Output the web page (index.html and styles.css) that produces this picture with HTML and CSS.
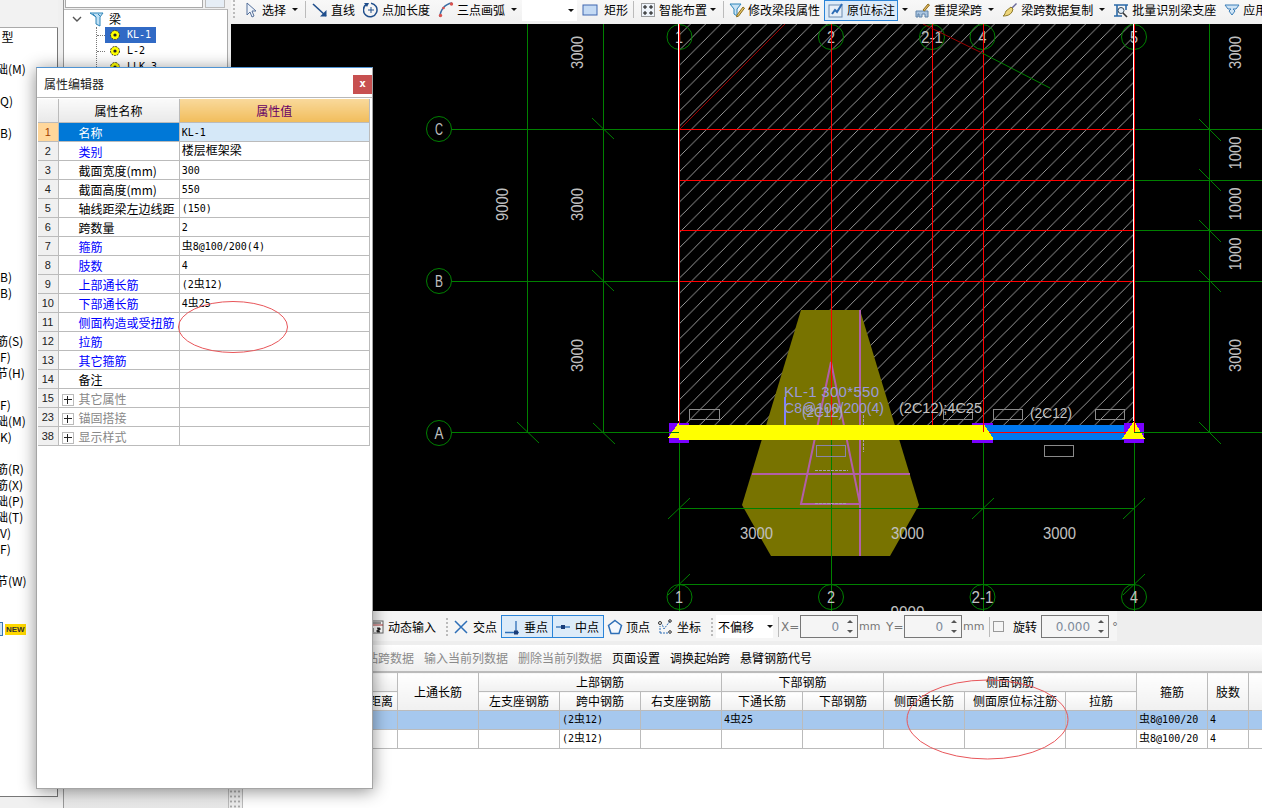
FILE: index.html
```html
<!DOCTYPE html>
<html lang="zh-CN">
<head>
<meta charset="utf-8">
<title>属性编辑器</title>
<link rel="stylesheet" href="styles.css">
</head>
<body>
<div class="app">
  <aside class="side">
    <div class="side-head"></div>
    <div class="side-list">
      <div class="srow">&nbsp;&nbsp;型</div><div class="srow"></div>
      <div class="srow">础(M)</div><div class="srow"></div>
      <div class="srow">(Q)</div><div class="srow"></div>
      <div class="srow">(B)</div><div class="srow"></div><div class="srow"></div><div class="srow"></div><div class="srow"></div><div class="srow"></div><div class="srow"></div><div class="srow"></div><div class="srow"></div>
      <div class="srow">(B)</div>
      <div class="srow">(B)</div><div class="srow"></div><div class="srow"></div>
      <div class="srow">筋(S)</div>
      <div class="srow">(F)</div>
      <div class="srow">节(H)</div><div class="srow"></div>
      <div class="srow">(F)</div>
      <div class="srow">础(M)</div>
      <div class="srow">(K)</div><div class="srow"></div>
      <div class="srow">筋(R)</div>
      <div class="srow">筋(X)</div>
      <div class="srow">础(P)</div>
      <div class="srow">础(T)</div>
      <div class="srow">(V)</div>
      <div class="srow">(F)</div><div class="srow"></div>
      <div class="srow">节(W)</div><div class="srow"></div><div class="srow"></div>
      <div class="srow new-row"><span class="new-box"></span><span class="new">NEW</span></div>
    </div>
  </aside>
  <div class="gutter"></div>
  <section class="treecol">
    <div class="tree-search"><div class="search-box"></div><div class="search-btn"></div></div>
    <div class="tree">
      <div class="troot">
        <svg class="chev" width="10" height="6" viewBox="0 0 10 6"><path d="M1 1l4 4 4-4" fill="none" stroke="#555" stroke-width="1.4"/></svg>
        <svg class="beamicon" width="15" height="16" viewBox="0 0 15 16"><path d="M1 2h13l-3 4v9l-4-2V6z" fill="#bfe0f5" stroke="#2d84b8"/><path d="M4 3l3 3M9 3l2 2" stroke="#2d84b8" fill="none"/></svg>
        <span>梁</span>
      </div>
      <div class="tkids">
        <div class="titem sel"><svg class="gear" width="12" height="12" viewBox="0 0 12 12"><circle cx="6" cy="6" r="4.5" fill="#ff0" stroke="#333" stroke-dasharray="2 1"/><circle cx="6" cy="6" r="1.6" fill="#222"/></svg><span>KL-1</span></div>
        <div class="titem"><svg class="gear" width="12" height="12" viewBox="0 0 12 12"><circle cx="6" cy="6" r="4.5" fill="#ff0" stroke="#333" stroke-dasharray="2 1"/><circle cx="6" cy="6" r="1.6" fill="#222"/></svg><span>L-2</span></div>
        <div class="titem"><svg class="gear" width="12" height="12" viewBox="0 0 12 12"><circle cx="6" cy="6" r="4.5" fill="#ff0" stroke="#333" stroke-dasharray="2 1"/><circle cx="6" cy="6" r="1.6" fill="#222"/></svg><span>LLK-3</span></div>
      </div>
    </div>
    <div class="tree-foot"></div>
  </section>
  <div class="splitter"></div>
  <main class="main">
    <div class="toolbar">
      <i class="grip"></i>
      <div class="tool first"><svg width="16" height="16" viewBox="0 0 16 16"><path d="M4 1v12l3-3 2 5 2-1-2-5h4z" fill="#eef3fa" stroke="#55709a"/></svg><span>选择</span><b class="caret"></b></div>
      <i class="sep sa"></i>
      <div class="tool"><svg width="16" height="16" viewBox="0 0 16 16"><path d="M1 2l13 12" stroke="#1f4e8c" stroke-width="1.6"/><path d="M14.5 8v6.5H8z" fill="#1f4e8c"/></svg><span>直线</span></div>
      <div class="tool"><svg width="16" height="16" viewBox="0 0 16 16"><path d="M3 2.6A6.8 6.8 0 1 0 8 1.2" fill="none" stroke="#1f4e8c" stroke-width="1.5"/><path d="M1 1l5 0-2 4z" fill="#1f4e8c"/><path d="M8 5v6M5 8h6" stroke="#1f4e8c"/></svg><span>点加长度</span></div>
      <div class="tool"><svg width="16" height="16" viewBox="0 0 16 16"><path d="M2 15C2 8 7 2 14 1" fill="none" stroke="#3a6ea5" stroke-width="1.5"/><circle cx="2.5" cy="13.5" r="1.7" fill="#d9534f"/><circle cx="13.5" cy="2" r="1.7" fill="#d9534f"/><circle cx="5.5" cy="6" r="1.3" fill="#d9534f"/></svg><span>三点画弧</span><b class="caret"></b></div>
      <div class="combo"><b class="caret"></b></div>
      <div class="tool rect"><svg width="16" height="16" viewBox="0 0 16 16"><rect x="1" y="3" width="14" height="10" fill="#c4daf4" stroke="#3f66b0"/></svg><span class="wide">矩形</span></div>
      <i class="sep sb"></i>
      <div class="tool"><svg width="16" height="16" viewBox="0 0 16 16"><rect x="1.5" y="1.5" width="13" height="13" fill="#eef4fb" stroke="#444" stroke-dasharray="1 1"/><path d="M5 3v4M3 5h4M11 3v4M9 5h4M5 9v4M3 11h4M11 9v4M9 11h4" stroke="#111"/></svg><span>智能布置</span><b class="caret flush"></b></div>
      <i class="sep sc"></i>
      <div class="tool"><svg width="16" height="16" viewBox="0 0 16 16"><path d="M1 2h11l-4 5v7l-3-2V7z" fill="#c9e3f5" stroke="#2d84b8"/><path d="M8 13l6-8 1.5 1.2-6 8-2 .6z" fill="#e8c66a" stroke="#8a6d1d"/></svg><span>修改梁段属性</span></div>
      <div class="tool active"><svg width="16" height="16" viewBox="0 0 16 16"><rect x="1" y="3" width="13" height="12" fill="#e7eff8" stroke="#6d8cb0"/><path d="M4 12l3-4 2 2 5-8" fill="none" stroke="#2d6cb5" stroke-width="2"/></svg><span>原位标注</span></div>
      <b class="caret solo"></b>
      <div class="tool t7"><svg width="16" height="16" viewBox="0 0 16 16"><path d="M1 15V9h12v6h-3v-3H7v3H4v-3H3v3z" fill="#a9c4e0" stroke="#5f82a8"/><path d="M8 8l5-6 1.5 1-5 6z" fill="#e5b75f" stroke="#8a6d1d"/></svg><span>重提梁跨</span><b class="caret"></b></div>
      <div class="tool"><svg width="16" height="16" viewBox="0 0 16 16"><path d="M9 6l5-5 1 1-5 5z" fill="#6a6a9a"/><path d="M9 5l2 2-1 3c-2 3-5 4-9 4 2-1 2-3 3-5z" fill="#eed67a" stroke="#8f7a2a"/></svg><span>梁跨数据复制</span><b class="caret"></b></div>
      <div class="tool"><svg width="16" height="16" viewBox="0 0 16 16"><path d="M1 3h14M1 14h8M4 3v11M13 3v5" stroke="#2b6aa8" stroke-width="1.6"/><circle cx="8" cy="8.5" r="3" fill="#e4f0fa" stroke="#345"/><path d="M10 11l4 4" stroke="#333" stroke-width="1.6"/></svg><span>批量识别梁支座</span></div>
      <div class="tool"><svg width="16" height="16" viewBox="0 0 16 16"><path d="M1 3h14l-3 4H9l2 2-3 4-3-4 2-2H4z" fill="#cfe4f6" stroke="#3c7fb8"/></svg><span>应用</span></div>
    </div>

    <svg class="canvas" viewBox="231 24 1031 587" width="1031" height="587">
      <defs>
        <pattern id="hatch" patternUnits="userSpaceOnUse" width="15.2" height="15.2">
          <path d="M-1 16.2L16.2 -1" stroke="#c8c8c8" stroke-width="0.8"/>
        </pattern>
      </defs>
      <rect x="231" y="24" width="1031" height="587" fill="#000"/>
      <rect x="680" y="24" width="453" height="402" fill="url(#hatch)"/>

      <g class="gline">
        <path d="M452 129.500H679M452 281.500H679M452 432.500H669M1134 129.500H1262M1134 180.500H1262M1134 230.500H1262M1134 281.500H1262M1144 432.500H1262"/>
        <path d="M527.500 24V432.500M603.500 24V432.500M1209.500 24V432.500"/>
        <path d="M679.500 440V611M831.500 440V611M983.500 440V611M1134.500 440V611"/>
        <path d="M679 508.500H1134M679 584.500H1134"/>
      </g>
      <g class="tick">
        <path d="M592 118l22 21M592 270l22 21M517 422l22 21M593 423l22 21M1199 119l22 22M1199 169l22 22M1199 220l22 22M1199 270l22 22M1199 422l22 22"/>
        <path d="M668 519l22-21M820 519l22-21M972 519l22-21M1123 519l22-21M668 595l22-21M1123 595l22-21"/>
      </g>
      <g class="ring">
        <circle cx="679.500" cy="37" r="12.500"/><circle cx="831" cy="37" r="12.500"/><circle cx="932" cy="37" r="12.500"/><circle cx="982.500" cy="37" r="12.500"/><circle cx="1134" cy="37" r="12.500"/>
        <circle cx="439" cy="129" r="12.500"/><circle cx="439" cy="281" r="12.500"/><circle cx="439" cy="433" r="12.500"/>
        <circle cx="679.500" cy="597" r="12.500"/><circle cx="831" cy="597" r="12.500"/><circle cx="982.500" cy="597" r="12.500"/><circle cx="1134" cy="597" r="12.500"/>
      </g>
      <g class="dim">
        <text x="679" y="43" textLength="8" lengthAdjust="spacingAndGlyphs">1</text><text x="831" y="43" textLength="8" lengthAdjust="spacingAndGlyphs">2</text><text x="932" y="43" textLength="22" lengthAdjust="spacingAndGlyphs">2-1</text><text x="982.500" y="43" textLength="8" lengthAdjust="spacingAndGlyphs">4</text><text x="1134" y="43" textLength="8" lengthAdjust="spacingAndGlyphs">5</text>
      </g>
      <g class="rline">
        <path d="M679 129.500H1134M679 180.500H1134M679 230.500H1134M679 281.500H1134"/>
        <path d="M679.500 24V425M831.500 24V310M932.500 24V425M983.500 24V425M1134.500 24V425"/>
      </g>
      <path d="M678.500 24V421M1133.500 24V421" class="wline"/>
      <path d="M680 129L785 24M923 24L982 53" class="dred"/>
      <path d="M982 53L1050 88" class="gdiag"/>

      <path class="olive" d="M801 310H860L919 505 890 556H771L742 505Z"/>
      <path class="mag" d="M860 310V556M752 474H910M831 362L801 504H860Z"/>
      <path class="rline" d="M831.500 310V425"/>
      <path class="gline" d="M831.500 440V556M742 508.500H919"/>
      <path class="bluev" d="M784.500 397V425"/>

      <g class="boxes">
        <rect x="689.500" y="409.500" width="30" height="10"/><rect x="943.500" y="409.500" width="29" height="10"/><rect x="993.500" y="409.500" width="29" height="10"/><rect x="1095.500" y="409.500" width="29" height="10"/><rect x="1044.500" y="445.500" width="29" height="11"/>
        <rect class="vio" x="816.500" y="445.500" width="29" height="11"/>
      </g>
      <path class="tiny" d="M815 470.500H848M815 503.500H847M863.500 415V452"/>

      <path fill="#7a00ff" d="M669 423h20v20h-20zM972 423h21v20h-21zM1124 423h20v20h-20z"/>
      <rect x="679" y="425" width="304" height="15" fill="#ff0"/>
      <rect x="983" y="425" width="141" height="15" fill="#0078f0"/>
      <path d="M983.500 432.500H1134" stroke="#f00" fill="none"/>
      <path fill="#ff0" d="M679 422L668 438H679ZM983 423L993 438V440H983ZM1134 421L1122 439H1145Z"/>
      <path d="M983.500 423V432" stroke="#f00" fill="none"/>
      <path d="M1134.500 421V433" stroke="#f00" fill="none"/>
      <path d="M668 432.500H679M1134 432.500H1145" class="gline"/>

      <g class="dim">
        <text transform="translate(583,52.500) rotate(-90)" textLength="33" lengthAdjust="spacingAndGlyphs">3000</text>
        <text transform="translate(583,204.500) rotate(-90)" textLength="33" lengthAdjust="spacingAndGlyphs">3000</text>
        <text transform="translate(583,355.500) rotate(-90)" textLength="33" lengthAdjust="spacingAndGlyphs">3000</text>
        <text transform="translate(508,204.500) rotate(-90)" textLength="33" lengthAdjust="spacingAndGlyphs">9000</text>
        <text transform="translate(1241,52.500) rotate(-90)" textLength="33" lengthAdjust="spacingAndGlyphs">3000</text>
        <text transform="translate(1241,153) rotate(-90)" textLength="33" lengthAdjust="spacingAndGlyphs">1000</text>
        <text transform="translate(1241,204) rotate(-90)" textLength="33" lengthAdjust="spacingAndGlyphs">1000</text>
        <text transform="translate(1241,254) rotate(-90)" textLength="33" lengthAdjust="spacingAndGlyphs">1000</text>
        <text transform="translate(1241,355.500) rotate(-90)" textLength="33" lengthAdjust="spacingAndGlyphs">3000</text>
        <text x="756.500" y="539" textLength="33" lengthAdjust="spacingAndGlyphs">3000</text>
        <text x="907.500" y="539" textLength="33" lengthAdjust="spacingAndGlyphs">3000</text>
        <text x="1059.500" y="539" textLength="33" lengthAdjust="spacingAndGlyphs">3000</text>
        <text x="907.500" y="618" textLength="34" lengthAdjust="spacingAndGlyphs">9000</text>
        <text x="439" y="135" textLength="8" lengthAdjust="spacingAndGlyphs">C</text><text x="439" y="287" textLength="8" lengthAdjust="spacingAndGlyphs">B</text><text x="439" y="439" textLength="9" lengthAdjust="spacingAndGlyphs">A</text>
        <text x="679" y="603" textLength="8" lengthAdjust="spacingAndGlyphs">1</text><text x="831" y="603" textLength="8" lengthAdjust="spacingAndGlyphs">2</text><text x="982.500" y="603" textLength="22" lengthAdjust="spacingAndGlyphs">2-1</text><text x="1134" y="603" textLength="8" lengthAdjust="spacingAndGlyphs">4</text>
      </g>
      <g class="note">
        <text class="vio" x="784" y="397" textLength="95" lengthAdjust="spacing">KL-1 300*550</text>
        <text class="vio" x="784" y="413" textLength="100" lengthAdjust="spacingAndGlyphs">C8@100/200(4)</text>
        <text class="vio2" x="802" y="417" textLength="41" lengthAdjust="spacingAndGlyphs">(2C12)</text>
        <text x="899" y="413" textLength="83" lengthAdjust="spacingAndGlyphs">(2C12);4C25</text>
        <text x="1030" y="418" textLength="42" lengthAdjust="spacingAndGlyphs">(2C12)</text>
      </g>
    </svg>

    <div class="snapbar">
      <div class="snapgroup">
        <div class="stool first"><svg width="16" height="16" viewBox="0 0 16 16"><rect x="1" y="2" width="14" height="12" fill="#fff" stroke="#666"/><path d="M1 6h14" stroke="#a33"/><path d="M3 4h10M5 9v4M9 9h3v2H9v2h3" stroke="#333"/></svg><span>动态输入</span></div>
        <i class="grip g2"></i>
        <div class="stool"><svg width="16" height="16" viewBox="0 0 16 16"><path d="M2 2l12 12M14 2L2 14" stroke="#2e6fb7" stroke-width="1.5"/></svg><span>交点</span></div>
        <div class="stool on"><svg width="16" height="16" viewBox="0 0 16 16"><path d="M1 13.500h14M12 2v11" stroke="#2e6fb7" stroke-width="1.300"/><rect x="10" y="11.500" width="4" height="4" fill="#1b3d78"/></svg><span>垂点</span></div>
        <div class="stool on join"><svg width="16" height="16" viewBox="0 0 16 16"><path d="M1 8h14" stroke="#2e6fb7" stroke-width="1.300"/><rect x="6" y="6" width="4" height="4" fill="#1b3d78"/></svg><span>中点</span></div>
        <div class="stool close"><svg width="16" height="16" viewBox="0 0 16 16"><path d="M8 1.500l6.500 5-2.500 8H4l-2.500-8z" fill="#f4f8fd" stroke="#2e6fb7" stroke-width="1.500"/></svg><span>顶点</span></div>
        <div class="stool coord"><svg width="16" height="16" viewBox="0 0 16 16"><path d="M3 14V7M3 14h9M13 2L7 10 5 5" fill="none" stroke="#2e6fb7" stroke-dasharray="2 1"/><circle cx="3" cy="4" r="1.500" fill="none" stroke="#333"/><circle cx="13" cy="2" r="1.300" fill="none" stroke="#333"/><circle cx="13" cy="13" r="1.300" fill="none" stroke="#333"/></svg><span>坐标</span></div>
        <i class="grip g3"></i>
        <div class="offset"><span>不偏移</span><b class="caret"></b></div>
        <i class="sep s2"></i>
        <span class="glabel lx">X=</span>
        <div class="spin"><span>0</span><em></em></div>
        <span class="glabel mm">mm</span>
        <span class="glabel ly">Y=</span>
        <div class="spin"><span>0</span><em></em></div>
        <span class="glabel mm">mm</span>
        <i class="sep s3"></i>
        <i class="check"></i>
        <span class="rot">旋转</span>
        <div class="spin big"><span>0.000</span><em></em></div>
        <span class="glabel deg">°</span>
      </div>
    </div>

    <div class="ribbon">
      <span class="rb off first">粘跨数据</span>
      <span class="rb off">输入当前列数据</span>
      <span class="rb off">删除当前列数据</span>
      <span class="rb">页面设置</span>
      <span class="rb">调换起始跨</span>
      <span class="rb">悬臂钢筋代号</span>
    </div>

    <table class="grid">
      <colgroup><col class="w166"><col class="w81"><col class="w81"><col class="w81"><col class="w81"><col class="w81"><col class="w81"><col class="w81"><col class="w101"><col class="w71"><col class="w71"><col class="w41"><col class="w14"></colgroup>
      <thead>
        <tr><th class="thl"></th><th rowspan="2">上通长筋</th><th colspan="3">上部钢筋</th><th colspan="2">下部钢筋</th><th colspan="3">侧面钢筋</th><th rowspan="2">箍筋</th><th rowspan="2">肢数</th><th rowspan="2"></th></tr>
        <tr><th class="thr">距左边线距离</th><th>左支座钢筋</th><th>跨中钢筋</th><th>右支座钢筋</th><th>下通长筋</th><th>下部钢筋</th><th>侧面通长筋</th><th>侧面原位标注筋</th><th>拉筋</th></tr>
      </thead>
      <tbody>
        <tr class="hi"><td></td><td></td><td></td><td class="v">(2<span class="bar">虫</span>12)</td><td></td><td class="v">4<span class="bar">虫</span>25</td><td></td><td></td><td></td><td></td><td class="v"><span class="bar">虫</span>8@100/20</td><td class="v">4</td><td></td></tr>
        <tr><td></td><td></td><td></td><td class="v">(2<span class="bar">虫</span>12)</td><td></td><td></td><td></td><td></td><td></td><td></td><td class="v"><span class="bar">虫</span>8@100/20</td><td class="v">4</td><td></td></tr>
      </tbody>
    </table>
    <div class="fill"></div>
    <div class="foot"><i class="foot-grip"></i></div>
  </main>
</div>

<section class="dialog">
  <header class="dlg-head"><span class="dlg-title">属性编辑器</span><span class="dlg-close">x</span></header>
  <table class="props">
    <colgroup><col class="pn"><col class="pk"><col class="pv"></colgroup>
    <thead><tr><th class="corner"></th><th class="hk">属性名称</th><th class="hv">属性值</th></tr></thead>
    <tbody>
      <tr class="cur"><td class="no">1</td><td class="k">名称</td><td class="val">KL-1</td></tr>
      <tr><td class="no">2</td><td class="k lnk">类别</td><td class="val"><span class="cn">楼层框架梁</span></td></tr>
      <tr><td class="no">3</td><td class="k">截面宽度(mm)</td><td class="val">300</td></tr>
      <tr><td class="no">4</td><td class="k">截面高度(mm)</td><td class="val">550</td></tr>
      <tr><td class="no">5</td><td class="k">轴线距梁左边线距</td><td class="val">(150)</td></tr>
      <tr><td class="no">6</td><td class="k">跨数量</td><td class="val">2</td></tr>
      <tr><td class="no">7</td><td class="k lnk">箍筋</td><td class="val"><span class="bar">虫</span>8@100/200(4)</td></tr>
      <tr><td class="no">8</td><td class="k lnk">肢数</td><td class="val">4</td></tr>
      <tr><td class="no">9</td><td class="k lnk">上部通长筋</td><td class="val">(2<span class="bar">虫</span>12)</td></tr>
      <tr><td class="no">10</td><td class="k lnk">下部通长筋</td><td class="val">4<span class="bar">虫</span>25</td></tr>
      <tr><td class="no">11</td><td class="k lnk">侧面构造或受扭筋</td><td class="val"></td></tr>
      <tr><td class="no">12</td><td class="k lnk">拉筋</td><td class="val"></td></tr>
      <tr><td class="no">13</td><td class="k lnk">其它箍筋</td><td class="val"></td></tr>
      <tr><td class="no">14</td><td class="k">备注</td><td class="val"></td></tr>
      <tr><td class="no">15</td><td class="k grp"><i class="plus"></i>其它属性</td><td class="val"></td></tr>
      <tr><td class="no">23</td><td class="k grp"><i class="plus"></i>锚固搭接</td><td class="val"></td></tr>
      <tr><td class="no">38</td><td class="k grp"><i class="plus"></i>显示样式</td><td class="val"></td></tr>
    </tbody>
  </table>
</section>

<svg class="mark mark-a" width="112" height="54" viewBox="0 0 112 54"><ellipse cx="56" cy="27" rx="54.500" ry="25.500"/></svg>
<svg class="mark mark-b" width="165" height="83" viewBox="0 0 165 83"><ellipse cx="82.500" cy="41.500" rx="80.500" ry="39.500"/></svg>
</body>
</html>
```
FILE: styles.css
```css
* { box-sizing: border-box; }
html, body { margin: 0; padding: 0; }
body {
  width: 1262px;
  height: 808px;
  overflow: hidden;
  position: relative;
  background: #fff;
  color: #000;
  font: 12px/16px "Noto Sans CJK SC", "Liberation Sans", sans-serif;
}
i, em, b { display: block; font-style: normal; }

.app { display: flex; width: 1262px; height: 808px; }

/* far-left list */
.side { width: 58px; height: 808px; display: flex; flex-direction: column; background: #f0f0f0; overflow: hidden; flex: none; }
.side-head { height: 28px; flex: none; background: #f2f2f2; border-bottom: 1px solid #aaa; }
.side-list { height: 769px; flex: none; background: #fff; border-right: 1px solid #777; border-bottom: 1px solid #777; padding-top: 1px; overflow: hidden; }
.srow { height: 16px; margin-left: -4px; white-space: nowrap; font-size: 12px; line-height: 16px; }
.new-row { display: flex; align-items: center; margin-left: 0; }
.new-box { width: 3px; height: 14px; border: 1px solid #3a77b5; border-left: 0; background: #cfe4f6; }
.new { margin-left: 2px; height: 11px; padding: 0 1px; background: #ffd800; color: #333; font: 700 8px/11px "Liberation Sans", sans-serif; }

.gutter { width: 6px; flex: none; background: #f0f0f0; border-right: 1px solid #999; }

/* tree column */
.treecol { width: 164px; flex: none; display: flex; flex-direction: column; background: #f0f0f0; }
.tree-search { height: 9px; flex: none; display: flex; gap: 2px; padding-left: 1px; }
.search-box { width: 138px; height: 8px; background: #fff; border: 1px solid #aaa; border-top: 0; }
.search-btn { width: 20px; height: 8px; background: #e6eef6; border: 1px solid #bbb; border-top: 0; }
.tree { height: 779px; flex: none; background: #fff; border-top: 1px solid #bbb; border-right: 1px solid #aaa; overflow: hidden; }
.tree-foot { flex: 1; background: linear-gradient(#f2f2f2, #e8e8e8); }
.troot { height: 17px; display: flex; align-items: center; padding-left: 8px; font-size: 12px; }
.chev { flex: none; }
.beamicon { margin-left: 7px; flex: none; }
.troot span { margin-left: 5px; }
.tkids { margin-left: 32px; border-left: 1px dotted #777; }
.titem { position: relative; height: 16px; padding-left: 9px; display: flex; font: 10px/16px "DejaVu Sans Mono", monospace; }
.titem::before { content: ""; position: absolute; left: 0; top: 8px; width: 8px; border-top: 1px dotted #777; }
.titem svg { margin: 2px 0 0 3px; flex: none; }
.titem span { margin-left: 6px; }
.titem.sel { color: #fff; }
.titem.sel::after { content: ""; position: absolute; left: 8px; top: 0; width: 51px; height: 16px; background: #316ac5; z-index: 0; }
.titem.sel svg, .titem.sel span { position: relative; z-index: 1; }

.splitter { width: 3px; flex: none; background: #f0f0f0; }

/* main column */
.main { width: 1031px; flex: none; display: flex; flex-direction: column; height: 808px; background: #fff; }

.toolbar { height: 24px; flex: none; display: flex; align-items: flex-start; gap: 8px; background: linear-gradient(#f8f8f8, #f0f0f0); white-space: nowrap; overflow: hidden; }
.grip { width: 2px; height: 18px; margin-left: 2px; background: repeating-linear-gradient(#bbb 0 2px, transparent 2px 4px); flex: none; }
.tool { display: flex; align-items: center; gap: 3px; height: 19px; flex: none; }
.tool svg { flex: none; }
.tool.first { margin-left: 0; }
.tool.rect { margin-left: -3px; }
.tool .wide { margin-left: 3px; }
.tool.active { margin-left: -4px; padding: 0 2px 1px 3px; gap: 3px; height: 21px; width: 74px; background: #dcebf9; border: 1px solid #2a84d8; }
.tool.t7 { margin-left: -1px; }
.sep { width: 1px; height: 17px; margin-top: 1px; background: #bbb; flex: none; }
.sep.sa { margin-left: -1px; margin-right: -2px; }
.sep.sb { margin-left: -3px; margin-right: -2px; }
.sep.sc { margin-left: -1px; margin-right: -3px; }
.caret { width: 0; height: 0; border: 3px solid transparent; border-top: 3px solid #111; border-bottom: 0; margin-left: 3px; flex: none; }
.caret.flush { margin-left: 0; }
.caret.solo { margin: 8px 0 0 -4px; }
.combo { width: 55px; height: 21px; margin-left: -3px; background: #fff; display: flex; justify-content: flex-end; align-items: center; padding-right: 3px; flex: none; }

.canvas { display: block; flex: none; background: #000; }
.canvas path, .canvas rect { shape-rendering: crispEdges; }
.gline path, path.gline { stroke: #008000; fill: none; }
.tick path { stroke: #008000; fill: none; shape-rendering: auto; }
.rline path, path.rline { stroke: #f00; fill: none; }
.wline { stroke: #fff; fill: none; }
.canvas .dred { stroke: #9a0000; fill: none; shape-rendering: auto; }
.canvas .gdiag { stroke: #008000; fill: none; shape-rendering: auto; }
.ring circle { fill: none; stroke: #008000; }
.canvas .olive { fill: #787300; shape-rendering: auto; }
.canvas .mag { fill: none; stroke: #b25fa8; stroke-width: 2; shape-rendering: auto; }
.bluev { stroke: #8080ff; stroke-width: 2; fill: none; }
.boxes rect { fill: none; stroke: #8a8a8a; }
.boxes .vio { stroke: #8a85a8; }
.canvas .tiny { stroke: #a89bb0; stroke-dasharray: 3 1; fill: none; }
.dim text { fill: #c0c0c0; font: 17px "Liberation Sans", sans-serif; text-anchor: middle; }
.note text { fill: #c4c4c4; font: 15px "Liberation Sans", sans-serif; }
.note .vio { fill: #9a9ada; }
.note .vio2 { fill: #a8a8c8; }

/* snap bar */
.snapbar { height: 34px; flex: none; background: #eee; }
.snapgroup { height: 30px; width: 886px; padding-top: 1px; display: flex; align-items: center; background: #f5f5f5; white-space: nowrap; }
.stool { display: flex; align-items: center; gap: 4px; height: 23px; flex: none; }
.stool svg { flex: none; }
.stool.first { margin-left: 137px; }
.stool.on { padding: 0 2px; background: #dcebf9; border: 1px solid #2a84d8; width: 52px; margin-left: 4px; }
.stool.join { margin-left: -1px; }
.stool.close { margin-left: 3px; gap: 3px; }
.stool.coord { margin-left: 7px; }
.grip.g2 { margin: 0 5px 0 10px; height: 18px; }
.grip.g3 { margin: 0 3px 0 10px; height: 18px; }
.offset { width: 57px; height: 23px; background: #fff; display: flex; align-items: center; padding-left: 2px; flex: none; }
.offset .caret { margin-left: 13px; }
.sep.s2 { margin: 0 3px 0 5px; height: 20px; }
.sep.s3 { margin: 0 3px 0 -1px; height: 20px; }
.glabel { color: #777; font: 12px/16px "DejaVu Sans", sans-serif; flex: none; }
.glabel.lx { margin-left: -1px; width: 16px; }
.glabel.ly { width: 15px; }
.glabel.mm { margin: 0 5px 0 1px; width: 22px; font-size: 11px; }
.spin { width: 58px; height: 23px; margin-left: 3px; border: 1px solid #777; display: flex; justify-content: flex-end; align-items: center; color: #7d8a9a; flex: none; font: 12px/16px "DejaVu Sans", sans-serif; position: relative; padding-right: 18px; }
.spin.big { width: 68px; }
.spin em { position: absolute; right: 4px; top: 4px; width: 6px; height: 13px; }
.spin em::before, .spin em::after { content: ""; position: absolute; left: 0; width: 0; height: 0; border: 3px solid transparent; }
.spin em::before { top: 0; border-top: 0; border-bottom: 3px solid #555; }
.spin em::after { bottom: 0; border-bottom: 0; border-top: 3px solid #555; }
.check { width: 11px; height: 11px; border: 1px solid #999; background: #f5f5f5; flex: none; }
.rot { margin: 0 1px 0 9px; flex: none; width: 24px; }
.glabel.deg { margin-left: 3px; }

/* ribbon */
.ribbon { height: 27px; flex: none; display: flex; gap: 10px; align-items: center; padding-left: 123px; background: linear-gradient(#fff, #eee); border-bottom: 1px solid #bbb; white-space: nowrap; }
.rb.off { color: #8a8a8a; }
.rb.first { width: 60px; text-align: right; }

/* reinforcement grid */
.grid { border-collapse: collapse; table-layout: fixed; width: 1031px; flex: none; }
.w166 { width: 166px; } .w81 { width: 81px; } .w101 { width: 101px; } .w71 { width: 71px; } .w41 { width: 41px; } .w14 { width: 14px; }
.grid th { height: 19px; padding: 0; font-weight: 400; font-size: 12px; line-height: 16px; background: linear-gradient(#fff, #f0f0f0); border: 1px solid #bbb; white-space: nowrap; overflow: hidden; }
.grid .thr { text-align: right; padding-right: 4px; }
.grid td { height: 19px; padding: 0 0 0 2px; border: 1px solid #bbb; background: #fff; overflow: hidden; white-space: nowrap; }
.grid .hi td { background: #a6c8ee; }
.grid .v, .val { font: 10px/16px "DejaVu Sans Mono", monospace; }
.cn { font: 12px/12px "Noto Sans CJK SC", sans-serif; }
.bar { font: 11px/12px "Noto Sans CJK SC", sans-serif; }
.fill { flex: 1; background: #fff; }
.foot { height: 19px; flex: none; background: #fff; }
.foot-grip { width: 15px; height: 19px; margin-left: -3px; background: radial-gradient(circle, #aaa 1px, transparent 1.200px) 0 0 / 4px 5px #eee; border-right: 1px solid #bbb; border-left: 1px solid #bbb; }

/* property editor window */
.dialog { position: absolute; left: 36px; top: 67px; width: 337px; height: 722px; background: #fff; border: 1px solid #a5a5a5; border-top-color: #4f93d2; box-shadow: 0 2px 16px rgba(0,0,0,.45); }
.dlg-head { height: 30px; display: flex; align-items: flex-start; justify-content: space-between; border-bottom: 1px solid #b8b8b8; }
.dlg-title { margin: 8px 0 0 7px; font-size: 12px; line-height: 16px; color: #222; }
.dlg-close { width: 19px; height: 19px; margin-top: 7px; background: #c75050; color: #fff; text-align: center; font: 700 11px/18px "DejaVu Sans Mono", monospace; }
.props { border-collapse: collapse; table-layout: fixed; width: 332px; margin: 1px 0 0 1px; }
.pn { width: 20px; } .pk { width: 121px; } .pv { width: 190px; }
.props th { height: 23px; padding: 2px 0 0; font-weight: 400; font-size: 12px; border: 1px solid #bbb; border-top: 0; background: linear-gradient(#fafafa, #e9e9e9); }
.props .hv { background: linear-gradient(#f9d99b, #f1bd5c); color: #660066; }
.props .corner { border-left: 0; }
.props td { height: 19px; padding: 0; border: 1px solid #bbb; overflow: hidden; white-space: nowrap; line-height: 14px; }
.props .no { text-align: center; background: #f0f0f0; color: #222; font: 11px/14px "Liberation Sans", sans-serif; border-left: 0; }
.props .k { padding: 2px 0 0 20px; font-size: 12px; line-height: 14px; }
.props .val { padding: 2px 0 0 2px; line-height: 14px; }
.props .lnk { color: #0000ff; }
.props .grp { color: #888; padding-left: 3px; }
.plus { display: inline-block; width: 12px; height: 12px; margin-right: 5px; vertical-align: -2px; border: 1px solid #bbb; background:
  linear-gradient(#222, #222) center / 8px 1px no-repeat,
  linear-gradient(#222, #222) center / 1px 8px no-repeat, #fff; }
.cur .no { background: #ffd79b; color: #a04000; }
.cur .k { background: #0078d7; color: #fff; }
.cur .val { background: #d5e8f8; }

.mark { position: absolute; }
.mark ellipse { fill: none; stroke: #e8565a; stroke-width: 1; }
.mark-a { left: 177px; top: 300px; }
.mark-b { left: 905px; top: 678px; }
```
